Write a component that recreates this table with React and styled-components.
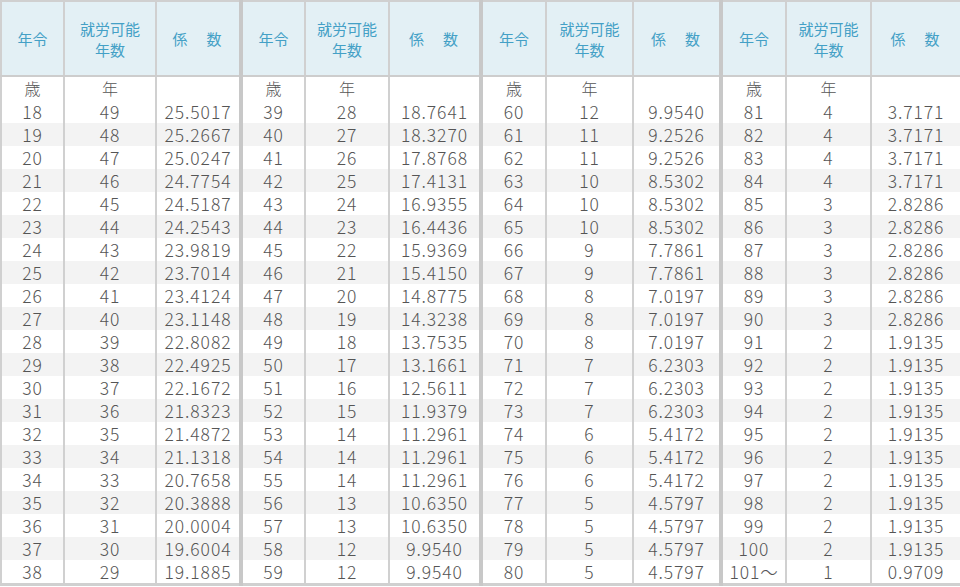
import React from 'react';
import styled, { createGlobalStyle } from 'styled-components';

const GlobalStyle = createGlobalStyle`
  html, body {
    margin: 0;
    padding: 0;
    background: #ffffff;
  }
  body {
    font-family: "Noto Sans CJK JP", "Noto Sans", sans-serif;
  }
`;

// 列幅（4ブロック × 3列）
const colWidths = [63, 92, 85, 64, 84, 92, 65, 87, 88, 65, 85, 90];

const groups = [
  {
    ages: range(18, 38),
    years: range(29, 49).reverse(),
    coefs: [
      '25.5017', '25.2667', '25.0247', '24.7754', '24.5187', '24.2543', '23.9819',
      '23.7014', '23.4124', '23.1148', '22.8082', '22.4925', '22.1672', '21.8323',
      '21.4872', '21.1318', '20.7658', '20.3888', '20.0004', '19.6004', '19.1885',
    ],
  },
  {
    ages: range(39, 59),
    years: [28, 27, 26, 25, 24, 23, 22, 21, 20, 19, 18, 17, 16, 15, 14, 14, 14, 13, 13, 12, 12],
    coefs: [
      '18.7641', '18.3270', '17.8768', '17.4131', '16.9355', '16.4436', '15.9369',
      '15.4150', '14.8775', '14.3238', '13.7535', '13.1661', '12.5611', '11.9379',
      '11.2961', '11.2961', '11.2961', '10.6350', '10.6350', '9.9540', '9.9540',
    ],
  },
  {
    ages: range(60, 80),
    years: [12, 11, 11, 10, 10, 10, 9, 9, 8, 8, 8, 7, 7, 7, 6, 6, 6, 5, 5, 5, 5],
    coefs: [
      '9.9540', '9.2526', '9.2526', '8.5302', '8.5302', '8.5302', '7.7861',
      '7.7861', '7.0197', '7.0197', '7.0197', '6.2303', '6.2303', '6.2303',
      '5.4172', '5.4172', '5.4172', '4.5797', '4.5797', '4.5797', '4.5797',
    ],
  },
  {
    ages: [...range(81, 100), '101～'],
    years: [4, 4, 4, 4, 3, 3, 3, 3, 3, 3, 2, 2, 2, 2, 2, 2, 2, 2, 2, 2, 1],
    coefs: [
      '3.7171', '3.7171', '3.7171', '3.7171', '2.8286', '2.8286', '2.8286',
      '2.8286', '2.8286', '2.8286', '1.9135', '1.9135', '1.9135', '1.9135',
      '1.9135', '1.9135', '1.9135', '1.9135', '1.9135', '1.9135', '0.9709',
    ],
  },
];

function range(from, to) {
  const out = [];
  for (let i = from; i <= to; i++) out.push(i);
  return out;
}

const Table = styled.table`
  width: 960px;
  table-layout: fixed;
  border-collapse: collapse;
  border: 2px solid #d0d0d0;
  border-bottom-width: 3px;
  color: #555555;
`;

const HeadRow = styled.tr`
  height: 75px;
`;

const HeadCell = styled.th`
  padding: 0;
  background: #e3f0f5;
  color: #44a0c6;
  font-size: 15px;
  font-weight: 400;
  line-height: 21px;
  text-align: center;
  vertical-align: middle;
  border-bottom: 2px solid #cdcdcd;
  border-right: ${(p) => (p.$groupEnd ? '4px solid #c8c8c8' : '2px solid #d0d0d0')};
  letter-spacing: ${(p) => (p.$spaced ? '2px' : '0')};
`;

const BodyRow = styled.tr`
  height: 23px;
  background: ${(p) => (p.$striped ? '#f3f3f3' : '#ffffff')};
`;

const Cell = styled.td`
  padding: 0;
  font-size: 17.5px;
  font-weight: 300;
  letter-spacing: 0.9px;
  line-height: 23px;
  text-align: center;
  white-space: nowrap;
  border-right: ${(p) => (p.$groupEnd ? '4px solid #c8c8c8' : '2px solid #d0d0d0')};
`;

const UnitCell = styled(Cell)`
  font-size: 16px;
  letter-spacing: 0;
`;

export default function App() {
  const rowCount = groups[0].ages.length;
  const last = groups.length - 1;

  return (
    <>
      <GlobalStyle />
      <Table>
        <colgroup>
          {colWidths.map((w, i) => (
            <col key={i} style={{ width: w }} />
          ))}
        </colgroup>
        <thead>
          <HeadRow>
            {groups.map((g, gi) => (
              <React.Fragment key={gi}>
                <HeadCell>年令</HeadCell>
                <HeadCell>
                  就労可能
                  <br />
                  年数
                </HeadCell>
                <HeadCell $groupEnd={gi < last} $spaced>
                  係　数
                </HeadCell>
              </React.Fragment>
            ))}
          </HeadRow>
        </thead>
        <tbody>
          <BodyRow>
            {groups.map((g, gi) => (
              <React.Fragment key={gi}>
                <UnitCell>歳</UnitCell>
                <UnitCell>年</UnitCell>
                <UnitCell $groupEnd={gi < last} />
              </React.Fragment>
            ))}
          </BodyRow>
          {Array.from({ length: rowCount }).map((_, ri) => (
            <BodyRow key={ri} $striped={ri % 2 === 1}>
              {groups.map((g, gi) => (
                <React.Fragment key={gi}>
                  <Cell>{g.ages[ri]}</Cell>
                  <Cell>{g.years[ri]}</Cell>
                  <Cell $groupEnd={gi < last}>{g.coefs[ri]}</Cell>
                </React.Fragment>
              ))}
            </BodyRow>
          ))}
        </tbody>
      </Table>
    </>
  );
}
